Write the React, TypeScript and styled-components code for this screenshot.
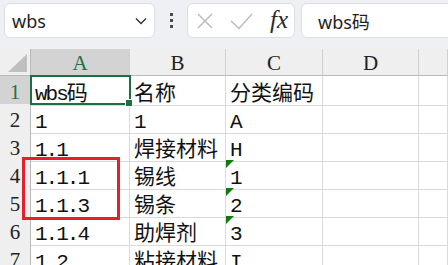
import React from "react";
import styled, { createGlobalStyle } from "styled-components";

const GlobalStyle = createGlobalStyle`
  html, body { margin: 0; padding: 0; background: #ffffff; overflow: hidden; }
  body { width: 448px; height: 265px; }
`;

const Page = styled.div`
  width: 448px;
  height: 265px;
  overflow: hidden;
  background: #ffffff;
`;

const TopBar = styled.div`
  display: flex;
  align-items: flex-start;
  height: 49px;
  box-sizing: border-box;
  padding: 3px 0 0 4px;
  background: #eef0f3;
  font-family: "Noto Sans", "Noto Sans CJK SC", sans-serif;
  font-size: 18px;
  color: #1f1f1f;
  overflow: hidden;
`;

const Field = styled.div<{ $w: number; $pl?: number }>`
  width: ${(p) => p.$w}px;
  height: 35px;
  flex-shrink: 0;
  box-sizing: border-box;
  background: #ffffff;
  border: 1px solid #dcdee2;
  border-radius: 6px;
  display: flex;
  align-items: center;
  padding-left: ${(p) => p.$pl ?? 0}px;
`;

const NameText = styled.span`
  flex: 1;
`;

const Chevron = styled.svg`
  margin-right: 7px;
`;

const Dots = styled.div`
  width: 32px;
  height: 35px;
  flex-shrink: 0;
  display: flex;
  flex-direction: column;
  align-items: center;
  justify-content: center;
  gap: 3px;
  & > i {
    display: block;
    width: 3px;
    height: 3px;
    background: #4a4a4a;
  }
`;

const FuncIcons = styled.div`
  display: flex;
  align-items: center;
  width: 100%;
  padding: 0 6px 0 8px;
  box-sizing: border-box;
  justify-content: space-between;
`;

const Fx = styled.span`
  font-family: "Liberation Serif", serif;
  font-style: italic;
  font-size: 25px;
  color: #2a2a2a;
  line-height: 1;
  margin-bottom: 2px;
`;

const Gap = styled.div`
  width: 6px;
  flex-shrink: 0;
`;

const Sheet = styled.div`
  position: relative;
  font-family: "Liberation Mono", "Noto Sans CJK SC", monospace;
  font-size: 21px;
  color: #111111;
`;

const Row = styled.div<{ $h: number }>`
  display: grid;
  grid-template-columns: 31px 99px 96px 97px 96px 1fr;
  height: ${(p) => p.$h}px;
`;

const HeadCell = styled.div<{ $sel?: boolean; $row?: boolean }>`
  position: relative;
  box-sizing: border-box;
  background: ${(p) => (p.$sel ? "#d3d3d3" : "#efefef")};
  color: ${(p) => (p.$sel ? "#1e7145" : "#222222")};
  border-right: 1px solid ${(p) => (p.$row ? "#b9b9b9" : "#d0d0d0")};
  border-bottom: 1px solid ${(p) => (p.$row ? "#d6d6d6" : "#b9b9b9")};
  font-family: "Liberation Serif", serif;
  text-align: center;
  line-height: 21px;
  padding-top: ${(p) => (p.$row ? 6 : 4)}px;
  white-space: nowrap;
`;

const Corner = styled(HeadCell)`
  border-right-color: #b9b9b9;
`;

const CornerMark = styled.svg`
  position: absolute;
  right: 3px;
  bottom: 3px;
`;

const Cell = styled.div<{ $flag?: boolean }>`
  position: relative;
  box-sizing: border-box;
  border-right: 1px solid #dadada;
  border-bottom: 1px solid #dadada;
  padding: 8px 0 0 4px;
  line-height: 21px;
  white-space: nowrap;
  &::before {
    content: "";
    display: ${(p) => (p.$flag ? "block" : "none")};
    position: absolute;
    left: 0;
    top: 0;
    border-top: 8px solid #0f7b0f;
    border-right: 8px solid transparent;
  }
`;

const Latin = styled.span`
  letter-spacing: -2px;
`;

const Selection = styled.div`
  position: absolute;
  left: 30px;
  top: 26px;
  width: 101px;
  height: 30px;
  box-sizing: border-box;
  border: 2px solid #1e6e43;
  pointer-events: none;
`;

const Handle = styled.div`
  position: absolute;
  right: -4px;
  bottom: -4px;
  width: 6px;
  height: 6px;
  background: #1e6e43;
  border: 1px solid #ffffff;
`;

const Highlight = styled.div`
  position: absolute;
  left: 22px;
  top: 108px;
  width: 98px;
  height: 63px;
  box-sizing: border-box;
  border: 3px solid #e3202b;
  pointer-events: none;
`;

const cols = ["A", "B", "C", "D", ""];

const rows: { a: string; b: string; c: string; flag?: boolean }[] = [
  { a: "wbs码", b: "名称", c: "分类编码" },
  { a: "1", b: "1", c: "A" },
  { a: "1.1", b: "焊接材料", c: "H" },
  { a: "1.1.1", b: "锡线", c: "1", flag: true },
  { a: "1.1.3", b: "锡条", c: "2", flag: true },
  { a: "1.1.4", b: "助焊剂", c: "3", flag: true },
  { a: "1.2", b: "粘接材料", c: "I" },
];

function Text({ value }: { value: string }) {
  const parts = value.split(/([\u4e00-\u9fff]+)/).filter((s) => s.length > 0);
  return (
    <>
      {parts.map((s, i) =>
        /[\u4e00-\u9fff]/.test(s) ? <span key={i}>{s}</span> : <Latin key={i}>{s}</Latin>
      )}
    </>
  );
}

export default function App() {
  return (
    <Page>
      <GlobalStyle />
      <TopBar>
        <Field $w={151} $pl={7}>
          <NameText>wbs</NameText>
          <Chevron width="12" height="8" viewBox="0 0 12 8">
            <polyline points="1,1.5 6,6.5 11,1.5" fill="none" stroke="#333" strokeWidth="1.4" />
          </Chevron>
        </Field>
        <Dots>
          <i />
          <i />
          <i />
        </Dots>
        <Field $w={108}>
          <FuncIcons>
            <svg width="18" height="18" viewBox="0 0 18 18">
              <path d="M2 2 L16 16 M16 2 L2 16" stroke="#bcbcbc" strokeWidth="1.5" fill="none" />
            </svg>
            <svg width="24" height="18" viewBox="0 0 24 18">
              <polyline points="1,9 9,16.5 22,2" stroke="#bcbcbc" strokeWidth="1.5" fill="none" />
            </svg>
            <Fx>fx</Fx>
          </FuncIcons>
        </Field>
        <Gap />
        <Field $w={170} $pl={16}>
          wbs码
        </Field>
      </TopBar>
      <Sheet>
        <Row $h={27}>
          <Corner>
            <CornerMark width="19" height="18" viewBox="0 0 19 18">
              <polygon points="19,0 19,18 0,18" fill="#bfbfbf" />
            </CornerMark>
          </Corner>
          {cols.map((c, i) => (
            <HeadCell key={i} $sel={c === "A"}>
              {c}
            </HeadCell>
          ))}
        </Row>
        {rows.map((r, i) => (
          <Row $h={28} key={i}>
            <HeadCell $row $sel={i === 0}>
              {i + 1}
            </HeadCell>
            <Cell>
              <Text value={r.a} />
            </Cell>
            <Cell>
              <Text value={r.b} />
            </Cell>
            <Cell $flag={r.flag}>
              <Text value={r.c} />
            </Cell>
            <Cell />
            <Cell />
          </Row>
        ))}
        <Selection>
          <Handle />
        </Selection>
        <Highlight />
      </Sheet>
    </Page>
  );
}
